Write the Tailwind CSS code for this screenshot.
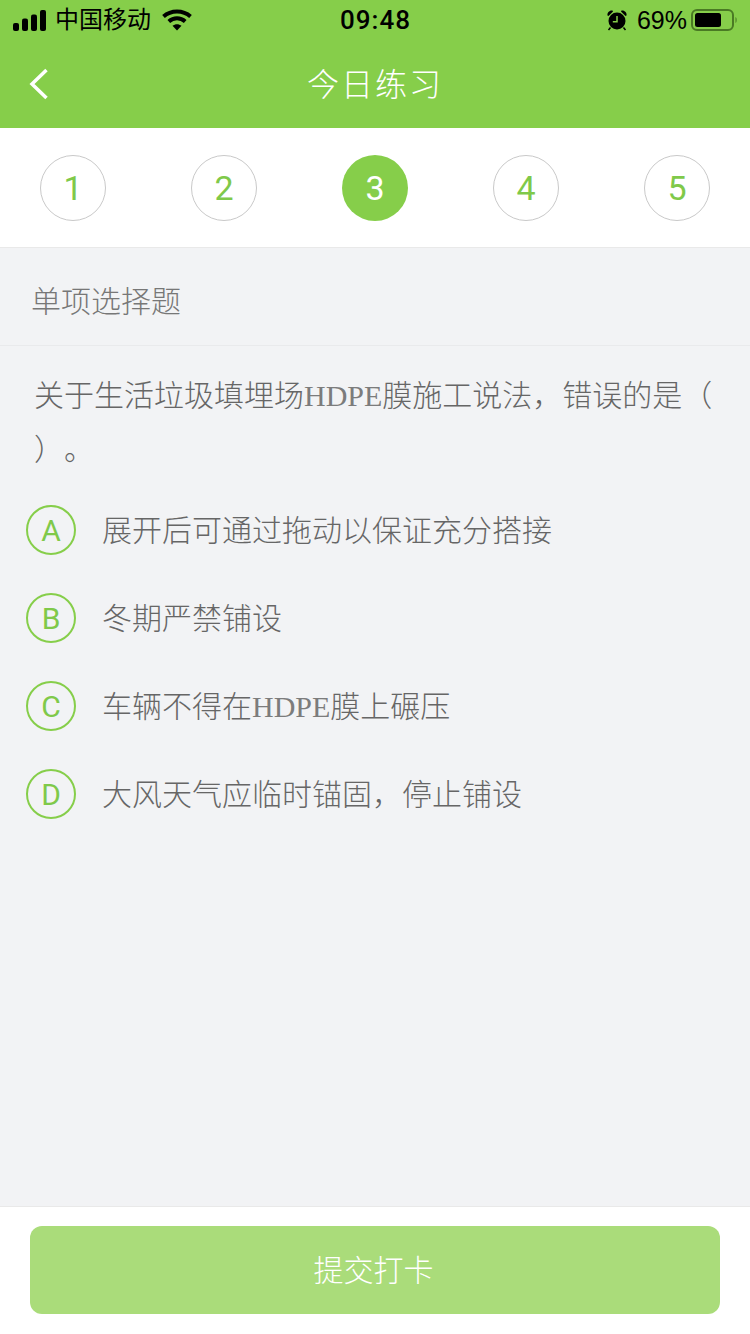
<!DOCTYPE html>
<html lang="zh-CN">
  <head>
    <meta charset="UTF-8" />
    <meta name="viewport" content="width=device-width, initial-scale=1.0" />
    <title>今日练习</title>
    <script src="https://cdn.jsdelivr.net/npm/@tailwindcss/browser@4"></script>
  </head>
  <body class="bg-[#f2f3f5]">
    <div class="w-[750px] h-[1334px] flex flex-col font-['Liberation_Sans','Noto_Sans_CJK_SC',sans-serif]">
      <!-- header -->
      <div class="h-[128px] bg-[#86ce4a] shrink-0">
        <div class="h-[40px] flex items-center justify-between pl-[13px] pr-[12px] text-black">
          <div class="w-[260px] flex items-center">
            <svg width="34" height="21" viewBox="0 0 34 21" fill="#000" class="mr-[8px]">
              <rect x="0" y="13" width="6" height="8" rx="2" />
              <rect x="9" y="8.500" width="6" height="12.500" rx="2" />
              <rect x="18" y="4.500" width="6" height="16.500" rx="2" />
              <rect x="27" y="0" width="6" height="21" rx="2" />
            </svg>
            <span class="text-[24px] leading-none">中国移动</span>
            <svg width="30" height="22" viewBox="0 0 30 22" class="ml-[11px]" fill="none" stroke="#000" stroke-width="4">
              <path d="M1.500 7.500C9 .8 21 .8 28.500 7.500" />
              <path d="M6.800 12.500C11.500 8.300 18.500 8.300 23.200 12.500" />
              <path d="M15 21.500L10.500 16.800C13 14.600 17 14.600 19.500 16.800Z" fill="#000" stroke="none" />
            </svg>
          </div>
          <span class="text-[26px] font-['Roboto',sans-serif] font-medium leading-none tracking-[1px]">09:48</span>
          <div class="w-[260px] flex items-center justify-end">
            <svg width="22" height="22" viewBox="0 0 22 22" fill="#000" class="mr-[9px]">
              <circle cx="11" cy="12" r="8.500" />
              <path d="M1.500 6.500C1 3.500 3.500 1 6.500 1.500L7 2.500 2.500 7Z" />
              <path d="M20.500 6.500C21 3.500 18.500 1 15.500 1.500L15 2.500 19.500 7Z" />
              <path d="M4.500 18.500L2.500 21M17.500 18.500L19.500 21" stroke="#000" stroke-width="1.500" />
              <path d="M11 7V12.700H6.800" fill="none" stroke="#86ce4a" stroke-width="1.500" />
            </svg>
            <span class="text-[25px] leading-none">69%</span>
            <svg width="47" height="24" viewBox="0 0 47 24" class="ml-[4px]">
              <rect x="1" y="2" width="41" height="20" rx="5" fill="none" stroke="#4a7a24" stroke-width="2" />
              <rect x="4" y="5" width="26" height="14" rx="2.500" fill="#000" />
              <path d="M44.500 9C46 9.500 46 14.500 44.500 15Z" fill="#4a7a24" />
            </svg>
          </div>
        </div>
        <div class="relative h-[88px] flex items-center justify-center">
          <svg width="20" height="32" viewBox="0 0 20 32" fill="none" stroke="#fff" stroke-width="3.500" class="absolute left-[29px] top-[28px]">
            <path d="M17.500 2L3 16L17.500 30" />
          </svg>
          <span class="text-[32px] text-white font-light leading-none tracking-[2px] mt-[1px]">今日练习</span>
        </div>
      </div>

      <!-- steps -->
      <div class="h-[120px] shrink-0 bg-white border-b border-[#e9e9e9] px-[40px] pt-[27px] flex justify-between items-start font-['Roboto',sans-serif]">
        <div class="w-[66px] h-[66px] rounded-full border border-[#c9c9c9] flex items-center justify-center text-[34px] text-[#7fc94a]">1</div>
        <div class="w-[66px] h-[66px] rounded-full border border-[#c9c9c9] flex items-center justify-center text-[34px] text-[#7fc94a]">2</div>
        <div class="w-[66px] h-[66px] rounded-full bg-[#86ce4a] flex items-center justify-center text-[34px] text-white">3</div>
        <div class="w-[66px] h-[66px] rounded-full border border-[#c9c9c9] flex items-center justify-center text-[34px] text-[#7fc94a]">4</div>
        <div class="w-[66px] h-[66px] rounded-full border border-[#c9c9c9] flex items-center justify-center text-[34px] text-[#7fc94a]">5</div>
      </div>

      <!-- question -->
      <div class="flex-1 text-[#666]">
        <div class="h-[98px] border-b border-[#e9eaec] pl-[31px] pt-[10px] flex items-center text-[30px] text-[#777] font-light">单项选择题</div>
        <div class="pl-[34px] pr-[30px] pt-[23px] text-[30px] leading-[54px] font-['Liberation_Serif','Noto_Sans_CJK_SC',serif] font-light [text-spacing-trim:space-all]">
          关于生活垃圾填埋场<span class="text-[#7c7c7c]">HDPE</span>膜施工说法，错误的是（ ）。
        </div>
        <div class="pl-[26px] pt-[9px] flex flex-col">
          <div class="h-[88px] flex items-center">
            <div class="w-[50px] h-[50px] rounded-full border-2 border-[#86ce4a] flex items-center justify-center text-[30px] text-[#7fc94a] font-['Roboto',sans-serif]">A</div>
            <span class="ml-[26px] text-[30px] font-light">展开后可通过拖动以保证充分搭接</span>
          </div>
          <div class="h-[88px] flex items-center">
            <div class="w-[50px] h-[50px] rounded-full border-2 border-[#86ce4a] flex items-center justify-center text-[30px] text-[#7fc94a] font-['Roboto',sans-serif]">B</div>
            <span class="ml-[26px] text-[30px] font-light">冬期严禁铺设</span>
          </div>
          <div class="h-[88px] flex items-center">
            <div class="w-[50px] h-[50px] rounded-full border-2 border-[#86ce4a] flex items-center justify-center text-[30px] text-[#7fc94a] font-['Roboto',sans-serif]">C</div>
            <span class="ml-[26px] text-[30px] font-light font-['Liberation_Serif','Noto_Sans_CJK_SC',serif]">车辆不得在<span class="text-[#7c7c7c]">HDPE</span>膜上碾压</span>
          </div>
          <div class="h-[88px] flex items-center">
            <div class="w-[50px] h-[50px] rounded-full border-2 border-[#86ce4a] flex items-center justify-center text-[30px] text-[#7fc94a] font-['Roboto',sans-serif]">D</div>
            <span class="ml-[26px] text-[30px] font-light">大风天气应临时锚固，停止铺设</span>
          </div>
        </div>
      </div>

      <!-- submit -->
      <div class="h-[128px] shrink-0 bg-white border-t border-[#e9e9e9] px-[30px] pt-[19px]">
        <div class="h-[88px] rounded-[12px] bg-[#aadc7a] flex items-center justify-center pr-[3px] text-[30px] text-white font-light">提交打卡</div>
      </div>
    </div>
  </body>
</html>
